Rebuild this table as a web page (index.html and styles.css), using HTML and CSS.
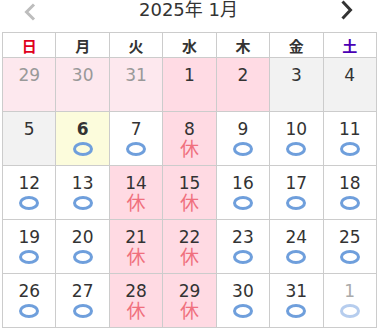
FILE: index.html
```html
<!DOCTYPE html>
<html lang="ja">
<head>
<meta charset="utf-8">
<link rel="stylesheet" href="styles.css">
</head>
<body>
<div class="cal">
  <div class="head">
    <svg class="nav prev" width="14" height="18" viewBox="0 0 14 18"><path d="M11 1.5 L3.5 9 L11 16.5" fill="none" stroke="#bdbdbd" stroke-width="3"/></svg>
    <div class="title">2025年 1月</div>
    <svg class="nav next" width="14" height="20" viewBox="0 0 14 20"><path d="M2.5 1.5 L10.5 10 L2.5 18.5" fill="none" stroke="#333" stroke-width="3"/></svg>
  </div>
  <table class="grid">
    <thead>
      <tr><th class="sun">日</th><th>月</th><th>火</th><th>水</th><th>木</th><th>金</th><th class="sat">土</th></tr>
    </thead>
    <tbody>
      <tr>
        <td class="other"><span class="n">29</span></td>
        <td class="other"><span class="n">30</span></td>
        <td class="other"><span class="n">31</span></td>
        <td class="hol"><span class="n">1</span></td>
        <td class="hol"><span class="n">2</span></td>
        <td class="gray"><span class="n">3</span></td>
        <td class="gray"><span class="n">4</span></td>
      </tr>
      <tr>
        <td class="gray"><span class="n">5</span></td>
        <td class="today"><span class="n b">6</span><span class="o"></span></td>
        <td><span class="n">7</span><span class="o"></span></td>
        <td class="closed"><span class="n">8</span><span class="x">休</span></td>
        <td><span class="n">9</span><span class="o"></span></td>
        <td><span class="n">10</span><span class="o"></span></td>
        <td><span class="n">11</span><span class="o"></span></td>
      </tr>
      <tr>
        <td><span class="n">12</span><span class="o"></span></td>
        <td><span class="n">13</span><span class="o"></span></td>
        <td class="closed"><span class="n">14</span><span class="x">休</span></td>
        <td class="closed"><span class="n">15</span><span class="x">休</span></td>
        <td><span class="n">16</span><span class="o"></span></td>
        <td><span class="n">17</span><span class="o"></span></td>
        <td><span class="n">18</span><span class="o"></span></td>
      </tr>
      <tr>
        <td><span class="n">19</span><span class="o"></span></td>
        <td><span class="n">20</span><span class="o"></span></td>
        <td class="closed"><span class="n">21</span><span class="x">休</span></td>
        <td class="closed"><span class="n">22</span><span class="x">休</span></td>
        <td><span class="n">23</span><span class="o"></span></td>
        <td><span class="n">24</span><span class="o"></span></td>
        <td><span class="n">25</span><span class="o"></span></td>
      </tr>
      <tr>
        <td><span class="n">26</span><span class="o"></span></td>
        <td><span class="n">27</span><span class="o"></span></td>
        <td class="closed"><span class="n">28</span><span class="x">休</span></td>
        <td class="closed"><span class="n">29</span><span class="x">休</span></td>
        <td><span class="n">30</span><span class="o"></span></td>
        <td><span class="n">31</span><span class="o"></span></td>
        <td class="next"><span class="n">1</span><span class="o"></span></td>
      </tr>
    </tbody>
  </table>
</div>
</body>
</html>
```
FILE: styles.css
```css
html, body {
  margin: 0;
  padding: 0;
  background: #fff;
}
body {
  font-family: "DejaVu Sans", "Noto Sans CJK JP", sans-serif;
  color: #333;
}
.cal {
  width: 379px;
}
.head {
  height: 32px;
  display: flex;
  align-items: flex-start;
  justify-content: space-between;
}
.title {
  font-size: 18px;
  line-height: 20px;
  color: #333;
}
.nav.prev {
  margin-left: 23px;
  margin-top: 3px;
}
.nav.next {
  margin-right: 25px;
}
.grid {
  margin-left: 2px;
  width: 375px;
  border-collapse: collapse;
  table-layout: fixed;
}
.grid th, .grid td {
  border: 1px solid #cccccc;
  text-align: center;
  padding: 0;
}
.grid th {
  height: 24px;
  font-family: "Noto Sans CJK JP", sans-serif;
  font-weight: bold;
  font-size: 15px;
  color: #333;
}
.grid th.sun { color: #e0001c; }
.grid th.sat { color: #4a00b4; }
.grid td {
  height: 54px;
  vertical-align: top;
  padding-top: 8px;
  box-sizing: border-box;
}
.n {
  display: block;
  font-size: 17px;
  line-height: 18px;
  color: #333;
}
.n.b { font-weight: bold; }
.o {
  display: block;
  width: 14px;
  height: 8px;
  border: 3px solid #6f9fdc;
  border-radius: 50%;
  margin: 4px auto 0;
}
.x {
  display: block;
  font-family: "Noto Sans CJK JP", sans-serif;
  font-size: 19px;
  line-height: 20px;
  color: #f0707e;
}
td.other { background: #fde8ee; }
td.other .n { color: #999; }
td.hol { background: #ffdbe4; }
td.gray { background: #f2f2f2; }
td.today { background: #fcfcdc; }
td.closed { background: #ffdae3; }
td.next .n { color: #aaa; }
td.next .o { border-color: #b6cdee; }
```
